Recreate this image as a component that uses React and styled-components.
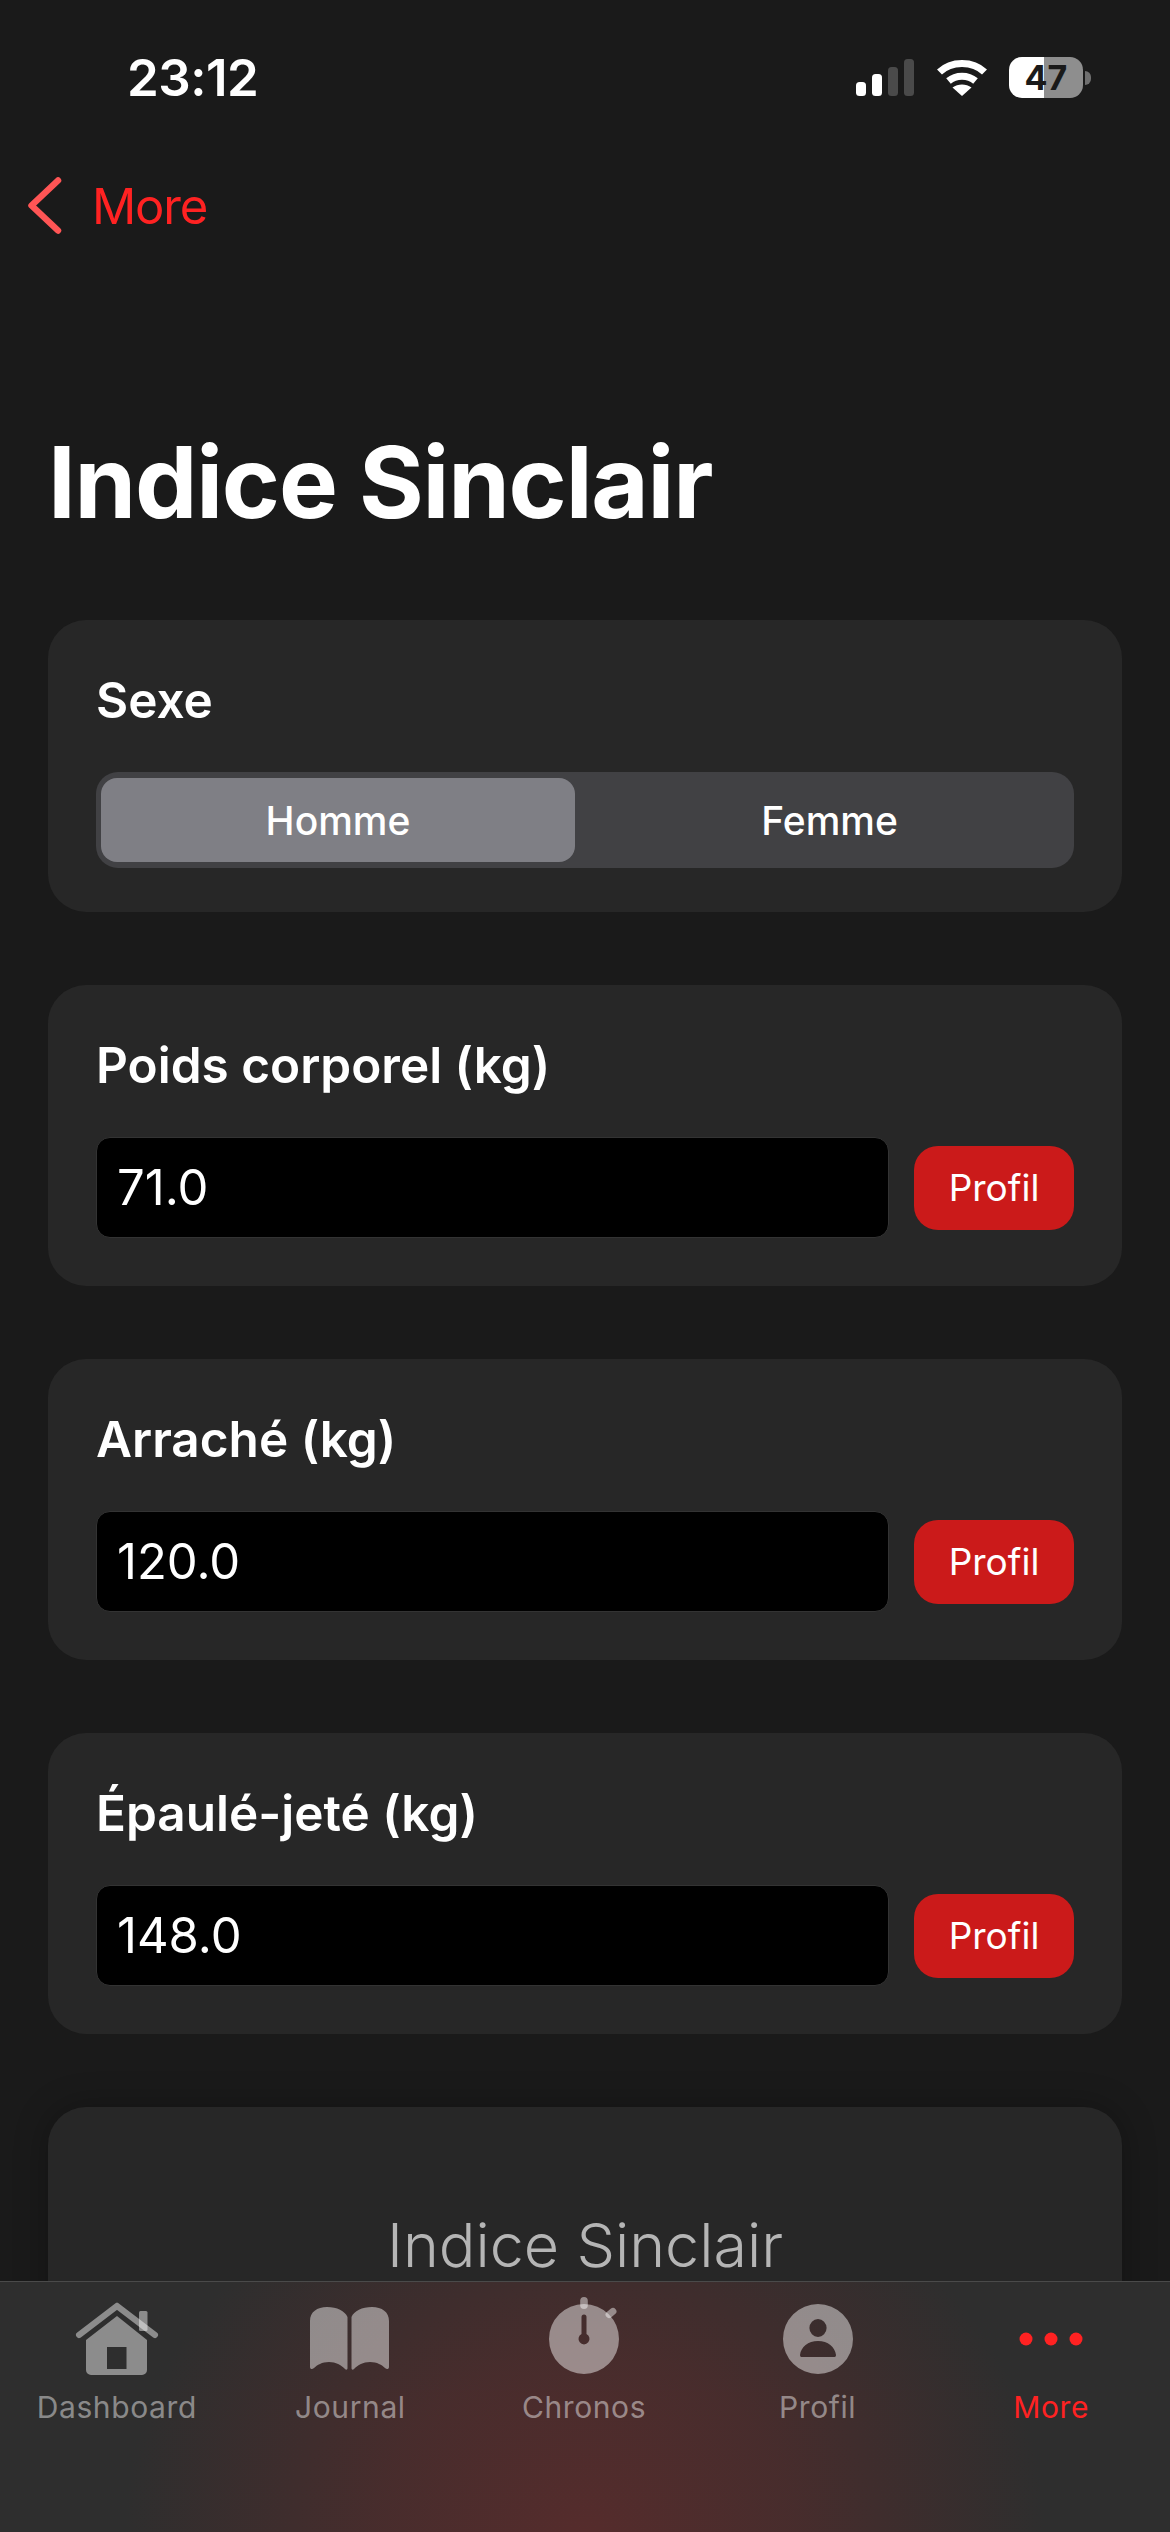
import React from "react";
import styled, { createGlobalStyle } from "styled-components";

const Global = createGlobalStyle`
  html, body { margin: 0; padding: 0; background: #1a1a1a; }
  body { font-family: Inter, "Liberation Sans", sans-serif; }
  * { box-sizing: border-box; }
`;

const Screen = styled.div`
  position: relative;
  width: 1170px;
  height: 2532px;
  overflow: hidden;
  background: #1a1a1a;
  color: #fff;
`;

const StatusBar = styled.div`
  height: 177px;
  padding: 50px 79px 0 127px;
  display: flex;
  justify-content: space-between;
  align-items: flex-start;
`;

const Clock = styled.div`
  font-size: 51px;
  line-height: 56px;
  font-weight: 600;
  letter-spacing: -0.5px;
`;

const StatusIcons = styled.div`
  display: flex;
  align-items: center;
  gap: 23px;
  padding-top: 7px;
`;

const Battery = styled.div`
  width: 74px;
  height: 41px;
  border-radius: 13px;
  overflow: hidden;
  background: linear-gradient(90deg, #fff 0 47%, #8e8e8e 47% 100%);
  color: #1a1a1a;
  font-size: 34px;
  line-height: 41px;
  font-weight: 700;
  text-align: center;
`;

const BatteryWrap = styled.div`
  display: flex;
  align-items: center;
  gap: 2px;
  margin-left: -1px;
`;

const BatteryCap = styled.div`
  width: 6px;
  height: 14px;
  border-radius: 0 7px 7px 0;
  background: #6f6f6f;
`;

const NavBar = styled.div`
  height: 100px;
  padding-left: 28px;
  display: flex;
  align-items: flex-start;
  gap: 28px;
  color: #ff2222;
  font-size: 49px;
  line-height: 60px;
  letter-spacing: -1.2px;
`;

const Title = styled.h1`
  margin: 150px 0 0 48px;
  font-size: 99px;
  line-height: 110px;
  font-weight: 700;
  letter-spacing: -1.2px;
`;

const Cards = styled.div`
  margin-top: 83px;
  padding: 0 48px;
  display: flex;
  flex-direction: column;
  gap: 73px;
`;

const Card = styled.section`
  background: #272727;
  border-radius: 38px;
  padding: 51px 48px 48px;
`;

const Label = styled.div`
  font-size: 49.5px;
  line-height: 58px;
  font-weight: 590;
  margin-bottom: 43px;
  letter-spacing: 0;
`;

const Segments = styled.div`
  display: flex;
  height: 96px;
  margin: 0 0 -4px;
  padding: 6px 6px 6px 5px;
  border-radius: 22px;
  background: #414144;
`;

const Segment = styled.div`
  flex: ${(p) => (p.$active ? "0 0 474px" : "1")};
  padding-left: ${(p) => (p.$active ? "0" : "16px")};
  display: flex;
  align-items: center;
  justify-content: center;
  font-size: 39px;
  font-weight: 450;
  border-radius: 16px;
  background: ${(p) => (p.$active ? "#7f7f85" : "transparent")};
`;

const InputRow = styled.div`
  display: flex;
  align-items: center;
  gap: 25px;
`;

const Field = styled.div`
  flex: 1;
  height: 101px;
  padding-left: 20px;
  display: flex;
  align-items: center;
  background: #000;
  border: 1px solid #333;
  border-radius: 14px;
  font-size: 49px;
`;

const ProfileButton = styled.button`
  width: 160px;
  height: 84px;
  border: 0;
  border-radius: 24px;
  background: #cb1a1a;
  color: #fff;
  font: 400 37px Inter, "Liberation Sans", sans-serif;
`;

const ResultCard = styled(Card)`
  height: 500px;
  padding-top: 100px;
  text-align: center;
  box-shadow: 0 0 34px rgba(0, 0, 0, 0.28);
`;

const ResultTitle = styled.div`
  font-size: 61px;
  line-height: 76px;
  color: #b5b5b5;
  font-weight: 350;
`;

const TabBar = styled.nav`
  position: absolute;
  left: 0;
  right: 0;
  bottom: 0;
  height: 251px;
  padding-right: 2px;
  border-top: 1px solid #4a4a4a;
  background:
    radial-gradient(ellipse 460px 400px at 50% 100%, #552c2c 0%, rgba(80, 44, 44, 0.75) 45%, rgba(46, 46, 46, 0) 100%),
    #2e2e2e;
  display: grid;
  grid-template-columns: repeat(5, 1fr);
`;

const Tab = styled.div`
  display: flex;
  flex-direction: column;
  align-items: center;
  padding-top: 15px;
  color: ${(p) => (p.$active ? "#ff2222" : "rgba(255,255,255,0.45)")};
  font-size: 30px;
  line-height: 36px;
  letter-spacing: 0.6px;
`;

const TabIcon = styled.svg`
  width: 84px;
  height: 84px;
  display: block;
  margin-bottom: 8px;
  fill: currentColor;
`;

function Signal() {
  return (
    <svg width="58" height="37" viewBox="0 0 58 37">
      <rect x="0" y="23" width="10" height="14" rx="3.5" fill="#fff" />
      <rect x="16" y="15" width="10" height="22" rx="3.5" fill="#fff" />
      <rect x="32" y="8" width="10" height="29" rx="3.5" fill="#4a4a4a" />
      <rect x="48" y="0" width="10" height="37" rx="3.5" fill="#4a4a4a" />
    </svg>
  );
}

function Wifi() {
  return (
    <svg width="50" height="37" viewBox="0 0 50 37" fill="none" stroke="#fff" strokeWidth="7">
      <path d="M2.500 13 C 14 1.500, 36 1.500, 47.500 13" />
      <path d="M11.500 22 C 19 15.500, 31 15.500, 38.500 22" />
      <path d="M25 37 L15.500 28.500 C 21 24.500, 29 24.500, 34.500 28.500 Z" fill="#fff" stroke="none" />
    </svg>
  );
}

function HomeIcon() {
  return (
    <TabIcon viewBox="0 0 84 84">
      <path d="M42 9 L80 38 M4 38 L42 9" fill="none" stroke="currentColor" strokeWidth="6" strokeLinecap="round" />
      <rect x="64" y="14" width="8.500" height="20" rx="1.500" />
      <path fillRule="evenodd" d="M42 19 L72 43 V73 a5 5 0 0 1 -5 5 H16 a5 5 0 0 1 -5 -5 V43 Z M32 50 V72 H51.500 V50 Z" />
    </TabIcon>
  );
}

function BookIcon() {
  return (
    <TabIcon viewBox="0 0 84 84">
      <path d="M2 24 C2 15 9 10 19 10 C29 10 37 14 39.500 20 V71 C39.500 73 38 73 37 72 C33 68 28 65 21 65 C14 65 9 68 6 71 C4 73 2 72 2 70 Z" />
      <path d="M81 24 C81 15 74 10 64 10 C54 10 46 14 43.500 20 V71 C43.500 73 45 73 46 72 C50 68 55 65 62 65 C69 65 74 68 77 71 C79 73 81 72 81 70 Z" />
    </TabIcon>
  );
}

function ChronoIcon() {
  return (
    <TabIcon viewBox="0 0 84 84">
      <path fillRule="evenodd" d="M42 7 A35 35 0 1 1 42 77 A35 35 0 1 1 42 7 Z M39.500 20 V37 A5.500 5.500 0 1 0 44.500 37 V20 A2.500 2.500 0 0 0 39.500 20 Z" />
      <rect x="38.200" y="0" width="7.600" height="12" rx="3.800" />
      <rect x="65.500" y="10" width="7" height="12" rx="3.500" transform="rotate(50 69 16)" />
    </TabIcon>
  );
}

function PersonIcon() {
  return (
    <TabIcon viewBox="0 0 84 84">
      <path fillRule="evenodd" d="M42 7 A35 35 0 1 1 42 77 A35 35 0 1 1 42 7 Z M42 22 A8.600 9 0 1 0 42 40 A8.600 9 0 1 0 42 22 Z M25.500 60 H58.500 C60 60 60 58 60 58 C59 50 52 44 42 44 C32 44 25 50 24 58 C24 60 25.500 60 25.500 60 Z" />
    </TabIcon>
  );
}

function DotsIcon() {
  return (
    <TabIcon viewBox="0 0 84 84">
      <circle cx="17" cy="42" r="6.500" />
      <circle cx="42" cy="42" r="6.500" />
      <circle cx="67" cy="42" r="6.500" />
    </TabIcon>
  );
}

const inputs = [
  ["Poids corporel (kg)", "71.0"],
  ["Arraché (kg)", "120.0"],
  ["Épaulé-jeté (kg)", "148.0"],
];

const tabs = [
  ["Dashboard", HomeIcon],
  ["Journal", BookIcon],
  ["Chronos", ChronoIcon],
  ["Profil", PersonIcon],
  ["More", DotsIcon],
];

export default function App() {
  return (
    <Screen>
      <Global />
      <StatusBar>
        <Clock>23:12</Clock>
        <StatusIcons>
          <Signal />
          <Wifi />
          <BatteryWrap>
            <Battery>47</Battery>
            <BatteryCap />
          </BatteryWrap>
        </StatusIcons>
      </StatusBar>
      <NavBar>
        <svg width="36" height="57" viewBox="0 0 36 57" fill="none" stroke="#ff5555" strokeWidth="6.500" strokeLinecap="round" strokeLinejoin="round">
          <path d="M30 3.500 L3.500 28.500 L30 53.500" />
        </svg>
        <span>More</span>
      </NavBar>
      <Title>Indice Sinclair</Title>
      <Cards>
        <Card>
          <Label>Sexe</Label>
          <Segments>
            <Segment $active>Homme</Segment>
            <Segment>Femme</Segment>
          </Segments>
        </Card>
        {inputs.map(([label, value]) => (
          <Card key={label}>
            <Label>{label}</Label>
            <InputRow>
              <Field>{value}</Field>
              <ProfileButton>Profil</ProfileButton>
            </InputRow>
          </Card>
        ))}
        <ResultCard>
          <ResultTitle>Indice Sinclair</ResultTitle>
        </ResultCard>
      </Cards>
      <TabBar>
        {tabs.map(([name, Icon]) => (
          <Tab key={name} $active={name === "More"}>
            <Icon />
            {name}
          </Tab>
        ))}
      </TabBar>
    </Screen>
  );
}
